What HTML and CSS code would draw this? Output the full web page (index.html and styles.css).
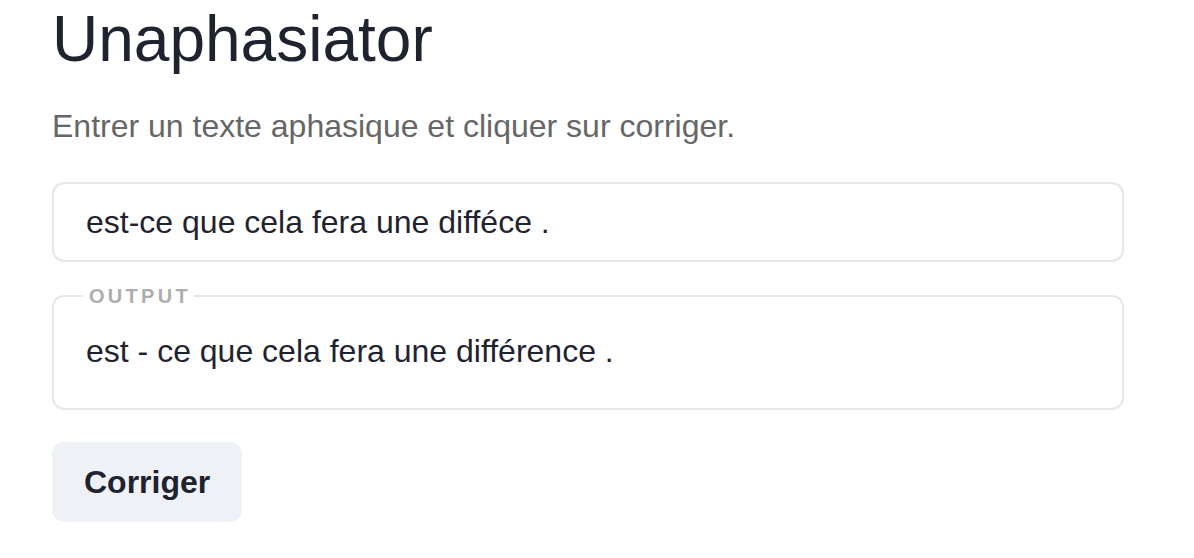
FILE: index.html
```html
<!DOCTYPE html>
<html lang="fr">
<head>
<meta charset="utf-8">
<title>Unaphasiator</title>
<link rel="stylesheet" href="styles.css">
</head>
<body>
<main class="page">
  <h1 class="title">Unaphasiator</h1>
  <p class="subtitle">Entrer un texte aphasique et cliquer sur corriger.</p>
  <div class="input-box">est-ce que cela fera une difféce .</div>
  <fieldset class="output">
    <legend class="output-label">OUTPUT</legend>
    <div class="output-text">est - ce que cela fera une différence .</div>
  </fieldset>
  <button class="btn" type="button">Corriger</button>
</main>
</body>
</html>
```

FILE: styles.css
```css
* { box-sizing: border-box; }
html, body {
  margin: 0;
  padding: 0;
  background: #ffffff;
}
body {
  font-family: "Liberation Sans", Arial, sans-serif;
  color: #1f2330;
}
.page {
  display: flex;
  flex-direction: column;
  align-items: flex-start;
  padding: 7px 70px 0 52px;
}
.title {
  margin: 0;
  font-size: 64px;
  line-height: 64px;
  font-weight: 400;
  color: #1f2330;
}
.subtitle {
  margin: 39px 0 0;
  font-size: 32px;
  line-height: 32px;
  color: #666666;
}
.input-box {
  margin-top: 40px;
  width: 1072px;
  height: 80px;
  border: 2px solid #e6e7eb;
  border-radius: 12px;
  padding: 22px 32px;
  font-size: 32px;
  line-height: 32px;
  color: #1f2330;
}
.output {
  margin: 24px 0 0;
  width: 1072px;
  min-width: 0;
  border: 2px solid #e6e7eb;
  border-radius: 12px;
  padding: 0;
}
.output-label {
  margin-left: 29px;
  padding: 0 3px 0 6px;
  font-size: 20px;
  line-height: 20px;
  font-weight: 700;
  letter-spacing: 3.3px;
  color: #adadad;
}
.output-text {
  padding: 29px 32px 41px;
  font-size: 32px;
  line-height: 32px;
  color: #1f2330;
}
.btn {
  margin-top: 32px;
  border: none;
  border-radius: 12px;
  background: #eef1f6;
  padding: 24px 32px;
  font-family: "Liberation Sans", Arial, sans-serif;
  font-size: 32px;
  line-height: 32px;
  font-weight: 700;
  color: #1f2330;
  height: 80px;
}
```
